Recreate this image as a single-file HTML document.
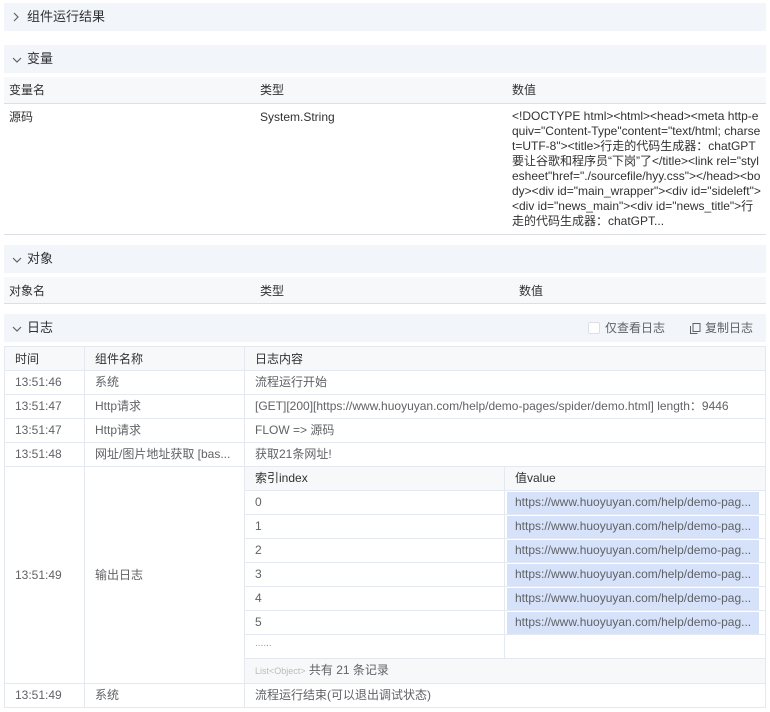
<!DOCTYPE html>
<html><head><meta charset="utf-8"><style>
*{box-sizing:border-box;margin:0;padding:0}
body{width:770px;height:712px;background:#fff;font-family:"Liberation Sans","Noto Sans CJK SC",sans-serif;font-size:12px;color:#606266;position:relative;overflow:hidden}
.a{position:absolute}
.hd{position:absolute;left:4px;width:762px;height:28px;background:#f2f5fa;font-size:13px;color:#303133;line-height:28px;padding-left:23px}
.hd svg{position:absolute;left:8px;top:9px}
.th{position:absolute;left:4px;width:762px;background:#f7f8f9;border-bottom:1px solid #dcdfe6;color:#303133}
.t{position:absolute;white-space:nowrap;line-height:14px}
.log{position:absolute;left:4px;top:346px;width:762px;height:362px;border:1px solid #e4e8f0}
.hl{position:absolute;left:0;width:760px;height:1px;background:#e4e8f0}
.vl{position:absolute;width:1px;background:#e4e8f0}
.blue{position:absolute;left:502px;width:252px;height:23px;background:#d6e2fa}
</style></head><body>
<div class="hd" style="top:3px"><svg width="8" height="10" viewBox="0 0 8 10"><path d="M2 1l4 4-4 4" fill="none" stroke="#606266" stroke-width="1.2"/></svg>组件运行结果</div>
<div class="hd" style="top:45px"><svg width="10" height="8" viewBox="0 0 10 8" style="top:11px"><path d="M1 2l4 4 4-4" fill="none" stroke="#606266" stroke-width="1.2"/></svg>变量</div>
<div class="th" style="top:77px;height:27px"><span class="t" style="left:5px;top:6px">变量名</span><span class="t" style="left:256px;top:6px">类型</span><span class="t" style="left:508px;top:6px">数值</span></div>
<div class="a" style="left:4px;top:104px;width:762px;height:131px;border-bottom:1px solid #dcdfe6;color:#303133">
<span class="t" style="left:5px;top:6px">源码</span><span class="t" style="left:256px;top:6px">System.String</span>
<div class="a" style="left:508px;top:5px;width:260px;line-height:15px;font-size:12px;white-space:nowrap">&lt;!DOCTYPE html&gt;&lt;html&gt;&lt;head&gt;&lt;meta http-e<br>quiv="Content-Type"content="text/html; charse<br>t=UTF-8"&gt;&lt;title&gt;行走的代码生成器：chatGPT<br>要让谷歌和程序员“下岗”了&lt;/title&gt;&lt;link rel="styl<br>esheet"href="./sourcefile/hyy.css"&gt;&lt;/head&gt;&lt;bo<br>dy&gt;&lt;div id="main_wrapper"&gt;&lt;div id="sideleft"&gt;<br>&lt;div id="news_main"&gt;&lt;div id="news_title"&gt;行<br>走的代码生成器：chatGPT...</div></div>
<div class="hd" style="top:245px"><svg width="10" height="8" viewBox="0 0 10 8" style="top:11px"><path d="M1 2l4 4 4-4" fill="none" stroke="#606266" stroke-width="1.2"/></svg>对象</div>
<div class="th" style="top:277px;height:27px"><span class="t" style="left:5px;top:7px">对象名</span><span class="t" style="left:256px;top:7px">类型</span><span class="t" style="left:515px;top:7px">数值</span></div>
<div class="hd" style="top:314px"><svg width="10" height="8" viewBox="0 0 10 8" style="top:11px"><path d="M1 2l4 4 4-4" fill="none" stroke="#606266" stroke-width="1.2"/></svg>日志
<span class="a" style="left:584px;top:8px;width:12px;height:12px;border:1px solid #dcdfe6;border-radius:2px;background:#fff"></span><span class="t" style="left:601px;top:7px;font-size:12px;color:#606266">仅查看日志</span>
<svg width="11" height="11" viewBox="0 0 11 11" style="left:686px;top:9px"><rect x="3" y="0.5" width="7" height="8" fill="none" stroke="#606266"/><path d="M0.5 3v7.5h7" fill="none" stroke="#606266"/></svg><span class="t" style="left:701px;top:7px;font-size:12px;color:#606266">复制日志</span></div>
<div class="log">
<div class="a" style="left:0;top:0;width:760px;height:23px;background:#f7f8f9"></div>
<div class="a" style="left:239px;top:120px;width:521px;height:24px;background:#f7f8f9"></div>
<div class="a" style="left:239px;top:312px;width:521px;height:24px;background:#f7f8f9"></div>
<div class="blue" style="top:145px"></div><div class="blue" style="top:169px"></div><div class="blue" style="top:193px"></div><div class="blue" style="top:217px"></div><div class="blue" style="top:241px"></div><div class="blue" style="top:265px"></div>
<div class="hl" style="top:23px"></div><div class="hl" style="top:47px"></div><div class="hl" style="top:71px"></div><div class="hl" style="top:95px"></div><div class="hl" style="top:119px"></div><div class="hl" style="top:336px"></div>
<div class="hl" style="left:239px;width:521px;top:143px"></div><div class="hl" style="left:239px;width:521px;top:167px"></div><div class="hl" style="left:239px;width:521px;top:191px"></div><div class="hl" style="left:239px;width:521px;top:215px"></div><div class="hl" style="left:239px;width:521px;top:239px"></div><div class="hl" style="left:239px;width:521px;top:263px"></div><div class="hl" style="left:239px;width:521px;top:287px"></div><div class="hl" style="left:239px;width:521px;top:311px"></div>
<div class="vl" style="left:79px;top:0;height:360px"></div><div class="vl" style="left:239px;top:0;height:360px"></div><div class="vl" style="left:499px;top:119px;height:192px"></div>
<span class="t" style="left:10px;top:5px;color:#303133">时间</span><span class="t" style="left:90px;top:5px;color:#303133">组件名称</span><span class="t" style="left:250px;top:5px;color:#303133">日志内容</span>
<span class="t" style="left:10px;top:28px">13:51:46</span><span class="t" style="left:90px;top:28px">系统</span><span class="t" style="left:250px;top:28px">流程运行开始</span>
<span class="t" style="left:10px;top:52px">13:51:47</span><span class="t" style="left:90px;top:52px">Http请求</span><span class="t" style="left:250px;top:52px">[GET][200][https://www.huoyuyan.com/help/demo-pages/spider/demo.html] length：9446</span>
<span class="t" style="left:10px;top:76px">13:51:47</span><span class="t" style="left:90px;top:76px">Http请求</span><span class="t" style="left:250px;top:76px">FLOW =&gt; 源码</span>
<span class="t" style="left:10px;top:100px">13:51:48</span><span class="t" style="left:90px;top:100px">网址/图片地址获取 [bas...</span><span class="t" style="left:250px;top:100px">获取21条网址!</span>
<span class="t" style="left:10px;top:221px">13:51:49</span><span class="t" style="left:90px;top:221px">输出日志</span>
<span class="t" style="left:250px;top:124px;color:#303133">索引index</span><span class="t" style="left:510px;top:124px;color:#303133">值value</span>
<span class="t" style="left:250px;top:148px">0</span><span class="t" style="left:510px;top:148px">https://www.huoyuyan.com/help/demo-pag...</span>
<span class="t" style="left:250px;top:172px">1</span><span class="t" style="left:510px;top:172px">https://www.huoyuyan.com/help/demo-pag...</span>
<span class="t" style="left:250px;top:196px">2</span><span class="t" style="left:510px;top:196px">https://www.huoyuyan.com/help/demo-pag...</span>
<span class="t" style="left:250px;top:220px">3</span><span class="t" style="left:510px;top:220px">https://www.huoyuyan.com/help/demo-pag...</span>
<span class="t" style="left:250px;top:244px">4</span><span class="t" style="left:510px;top:244px">https://www.huoyuyan.com/help/demo-pag...</span>
<span class="t" style="left:250px;top:268px">5</span><span class="t" style="left:510px;top:268px">https://www.huoyuyan.com/help/demo-pag...</span>
<span class="t" style="left:250px;top:290px;font-size:10px;color:#999">......</span>
<span class="t" style="left:250px;top:316px"><span style="font-size:9px;color:#bbb">List&lt;Object&gt;</span> 共有 21 条记录</span>
<span class="t" style="left:10px;top:341px">13:51:49</span><span class="t" style="left:90px;top:341px">系统</span><span class="t" style="left:250px;top:341px">流程运行结束(可以退出调试状态)</span>
</div>
</body></html>
